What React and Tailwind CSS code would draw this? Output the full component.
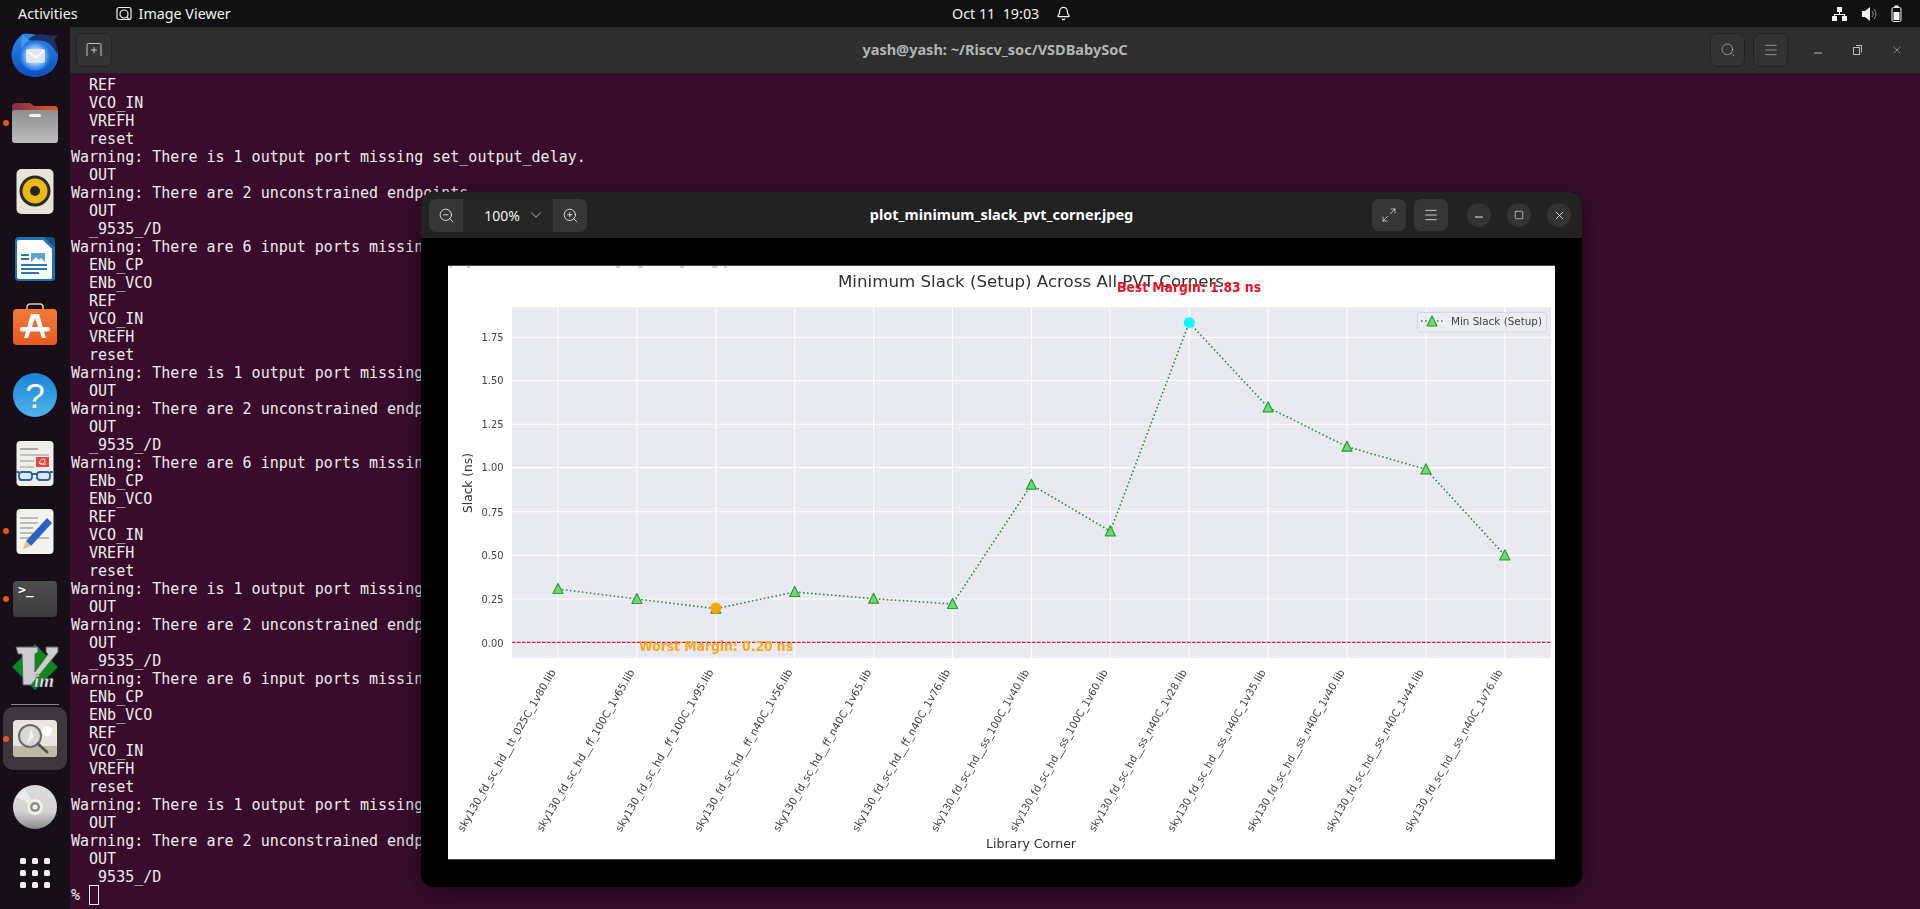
import { Bell, ChevronDown, Maximize2, Menu, Minus, Search, Square, X, ZoomIn, ZoomOut } from 'lucide-react'

const warnOutput = 'Warning: There is 1 output port missing set_output_delay.'
const warnEndpoints = 'Warning: There are 2 unconstrained endpoints.'
const warnInput = 'Warning: There are 6 input ports missing set_input_delay.'

const block = [
  warnOutput, '  OUT', warnEndpoints, '  OUT', '  _9535_/D',
  warnInput, '  ENb_CP', '  ENb_VCO', '  REF', '  VCO_IN', '  VREFH', '  reset',
]

const terminalLines = [
  '  REF', '  VCO_IN', '  VREFH', '  reset',
  ...block, ...block, ...block,
  warnOutput, '  OUT', warnEndpoints, '  OUT', '  _9535_/D',
]

const xTicks = Array.from({ length: 13 }, (_, i) => 558 + i * 78.9)

const yTicks = [
  ['1.75', 337.3], ['1.50', 380.6], ['1.25', 424.3], ['1.00', 467.6],
  ['0.75', 511.7], ['0.50', 555.3], ['0.25', 599], ['0.00', 642.7],
]

const libs = [
  'tt_025C_1v80', 'ff_100C_1v65', 'ff_100C_1v95', 'ff_n40C_1v56', 'ff_n40C_1v65', 'ff_n40C_1v76',
  'ss_100C_1v40', 'ss_100C_1v60', 'ss_n40C_1v28', 'ss_n40C_1v35', 'ss_n40C_1v40', 'ss_n40C_1v44', 'ss_n40C_1v76',
]

const slackY = [589, 599, 608.7, 592, 598.7, 604, 484.7, 531.3, 322.7, 407.3, 446.7, 469.3, 555.3]

function Triangle({ x, y }) {
  return (
    <polygon
      points={`${x},${y - 5.5} ${x + 5},${y + 4.5} ${x - 5},${y + 4.5}`}
      fill="#6fdc72"
      stroke="#2a9a32"
      strokeWidth="1.2"
      strokeLinejoin="round"
    />
  )
}

function SlackChart() {
  const font = '"DejaVu Sans", sans-serif'
  return (
    <svg viewBox="448 266 1107 593" className="block w-full h-full blur-[0.35px]" fontFamily={font}>
      {[[450, 2], [467, 3], [616, 4], [638, 5], [680, 4], [712, 5], [724, 3]].map(([x, w]) => (
        <rect key={x} x={x} y="266" width={w} height="2" fill="#cfcfcf" />
      ))}

      <text x="838" y="286.500" fontSize="16.500" fill="#303030" textLength="386" lengthAdjust="spacingAndGlyphs">
        Minimum Slack (Setup) Across All PVT Corners
      </text>

      <rect x="512" y="307" width="1039" height="351" fill="#e9e9f1" />
      {xTicks.map((x) => (
        <line key={x} x1={x} x2={x} y1="307" y2="658" stroke="#ffffff" strokeWidth="1.1" />
      ))}
      {yTicks.map(([label, y]) => (
        <g key={label}>
          <line x1="512" x2="1551" y1={y} y2={y} stroke="#ffffff" strokeWidth="1.1" />
          <text x="503.5" y={y + 3.8} fontSize="11" fill="#404040" textAnchor="end" textLength="22" lengthAdjust="spacingAndGlyphs">{label}</text>
        </g>
      ))}

      <line x1="512" x2="1551" y1="642.3" y2="642.3" stroke="#ea1026" strokeWidth="1.2" strokeDasharray="3.5 1.5" />
      <polyline
        points={xTicks.map((x, i) => `${x},${slackY[i]}`).join(' ')}
        fill="none"
        stroke="#2c8a3c"
        strokeWidth="1.6"
        strokeDasharray="1.6 2.4"
      />
      {xTicks.map((x, i) => (i === 8 ? null : <Triangle key={x} x={x} y={slackY[i]} />))}
      <circle cx={xTicks[2]} cy="608" r="5.5" fill="#ffa500" />
      <circle cx={xTicks[8]} cy="322.7" r="5.5" fill="#00ffff" />

      <text x="1117" y="292" fontSize="14" fontWeight="700" fill="#ee1122" textLength="144" lengthAdjust="spacingAndGlyphs">
        Best Margin: 1.83 ns
      </text>
      <text x="639" y="650.500" fontSize="14" fontWeight="700" fill="#ffa51c" textLength="154" lengthAdjust="spacingAndGlyphs">
        Worst Margin: 0.20 ns
      </text>

      <rect x="1417.5" y="312.5" width="129" height="19.5" rx="2.5" fill="#ecedf3" stroke="#d6d6de" />
      <line x1="1421" x2="1443" y1="321" y2="321" stroke="#2c8a3c" strokeWidth="1.5" strokeDasharray="1.5 2.5" />
      <Triangle x={1432} y={321.5} />
      <text x="1451" y="325" fontSize="11" fill="#404040" textLength="91" lengthAdjust="spacingAndGlyphs">
        Min Slack (Setup)
      </text>

      <text x="0" y="0" fontSize="12.500" fill="#303030" textAnchor="middle" textLength="60" lengthAdjust="spacingAndGlyphs" transform="translate(472 483) rotate(-90)">
        Slack (ns)
      </text>
      <text x="1031" y="848" fontSize="12.500" fill="#303030" textAnchor="middle" textLength="90" lengthAdjust="spacingAndGlyphs">
        Library Corner
      </text>

      {xTicks.map((x, i) => (
        <text
          key={x}
          x="0"
          y="0"
          fontSize="10.500"
          fill="#404040"
          textAnchor="end"
          textLength="185"
          lengthAdjust="spacingAndGlyphs"
          transform={`translate(${x - 2} 672) rotate(-60)`}
        >
          {`sky130_fd_sc_hd__${libs[i]}.lib`}
        </text>
      ))}
    </svg>
  )
}

function ThunderbirdIcon() {
  return (
    <svg width="48" height="48" viewBox="0 0 48 48">
      <defs>
        <linearGradient id="tb" x1="0" y1="0" x2="0" y2="1">
          <stop offset="0" stopColor="#2a86ea" />
          <stop offset="1" stopColor="#0c4fc0" />
        </linearGradient>
        <radialGradient id="tbcore">
          <stop offset="0.45" stopColor="#9fd4fa" />
          <stop offset="1" stopColor="#1f6fe0" />
        </radialGradient>
      </defs>
      <path d="M12 3C5 8 .5 16 .5 24.500 1 37 11 46 24 46s23-9 23-21.500c0-5-2-9-4-12L34 8C26 3 19 2 12 3z" fill="url(#tb)" />
      <path d="M17 9c4-5 12-7 19-5 4 1 8 1 11 0l-4 5c3 4 4 9 3 14-3-7-8-12-14-13-6-1-11 0-15-1z" fill="#1d2f63" />
      <path d="M12 3c-2 5-3 10-1 15 2-4 4-7 7-9-2-2-5-3-6-6z" fill="#3a9af0" />
      <circle cx="24" cy="25" r="15" fill="url(#tbcore)" />
      <rect x="15" y="18" width="19" height="14" rx="3" fill="#dfe6ee" />
      <path d="M15.500 19.500l9 7 9-7" fill="none" stroke="#ffffff" strokeWidth="2.200" />
    </svg>
  )
}

function FilesIcon() {
  return (
    <svg width="48" height="48" viewBox="0 0 48 48">
      <defs>
        <linearGradient id="ftab" x1="0" y1="0" x2="1" y2="0">
          <stop offset="0" stopColor="#7a2d52" />
          <stop offset="1" stopColor="#e9561f" />
        </linearGradient>
        <linearGradient id="fbody" x1="0" y1="0" x2="0" y2="1">
          <stop offset="0" stopColor="#8f8f8f" />
          <stop offset="1" stopColor="#bdbdbd" />
        </linearGradient>
      </defs>
      <path d="M1 8a4 4 0 0 1 4-4h14l4 3h20a4 4 0 0 1 4 4v8H1z" fill="url(#ftab)" />
      <path d="M1 14a3 3 0 0 1 3-3h40a3 3 0 0 1 3 3v27a3 3 0 0 1-3 3H4a3 3 0 0 1-3-3z" fill="url(#fbody)" />
      <rect x="18" y="15" width="12" height="3" rx="1.500" fill="#f2f2f2" />
    </svg>
  )
}

function RhythmboxIcon() {
  return (
    <svg width="48" height="48" viewBox="0 0 48 48">
      <rect x="5.500" y="2" width="37" height="45" rx="5" fill="#e8e4d8" />
      <circle cx="24" cy="24" r="15.500" fill="#2b2b2b" />
      <circle cx="24" cy="24" r="12.500" fill="#e8b917" />
      <circle cx="24" cy="24" r="5" fill="#262626" />
    </svg>
  )
}

function WriterIcon() {
  return (
    <svg width="48" height="48" viewBox="0 0 48 48">
      <path d="M8 2h26l10 10v30a4 4 0 0 1-4 4H8a4 4 0 0 1-4-4V6a4 4 0 0 1 4-4z" fill="#1b74b4" />
      <path d="M34 2h6a4 4 0 0 1 4 4v6z" fill="#14507f" />
      <path d="M8 5h24l9 9v28a2 2 0 0 1-2 2H8a2 2 0 0 1-2-2V7a2 2 0 0 1 2-2z" fill="#ffffff" />
      <rect x="10" y="19" width="8" height="2" fill="#2a79b4" />
      <rect x="10" y="23" width="8" height="2" fill="#2a79b4" />
      <rect x="20" y="18" width="14" height="9" fill="#5aa5d8" />
      <path d="M20 27l5-5 3 3 2-2 4 4z" fill="#ffffff" />
      <rect x="10" y="29" width="26" height="2" fill="#2a79b4" />
      <rect x="10" y="33" width="26" height="2" fill="#2a79b4" />
      <rect x="10" y="37" width="18" height="2" fill="#2a79b4" />
    </svg>
  )
}

function SoftwareIcon() {
  return (
    <svg width="48" height="48" viewBox="0 0 48 48">
      <defs>
        <linearGradient id="bag" x1="0" y1="0" x2="0" y2="1">
          <stop offset="0" stopColor="#f47a3a" />
          <stop offset="1" stopColor="#e9581f" />
        </linearGradient>
      </defs>
      <path d="M16 6V4a3 3 0 0 1 3-3h10a3 3 0 0 1 3 3v2" fill="none" stroke="#e7c9a8" strokeWidth="1.500" />
      <rect x="2" y="6" width="44" height="36" rx="4" fill="url(#bag)" />
      <path d="M20 11h8l7 24h-4l-7-20-7 20h-4z" fill="#ffffff" />
      <rect x="9" y="24" width="30" height="4.500" rx="2.200" fill="#ffffff" />
    </svg>
  )
}

function HelpIcon() {
  return (
    <svg width="48" height="48" viewBox="0 0 48 48">
      <defs>
        <linearGradient id="help" x1="0" y1="0" x2="0" y2="1">
          <stop offset="0" stopColor="#1a84d8" />
          <stop offset="1" stopColor="#4fb3ec" />
        </linearGradient>
      </defs>
      <circle cx="24" cy="24" r="22" fill="url(#help)" />
      <text x="24" y="37" textAnchor="middle" fontSize="35" fill="#ffffff" fontFamily="'Liberation Sans', sans-serif">?</text>
    </svg>
  )
}

function ReaderIcon() {
  return (
    <svg width="48" height="48" viewBox="0 0 48 48">
      <rect x="5.500" y="2" width="37" height="45" rx="4" fill="#eeeeea" />
      <rect x="9" y="9" width="18" height="2" fill="#aaa89f" />
      <rect x="9" y="15" width="29" height="2" fill="#c2c0b8" />
      <rect x="9" y="21" width="14" height="2" fill="#c2c0b8" />
      <rect x="9" y="27" width="14" height="2" fill="#c2c0b8" />
      <rect x="25" y="18" width="13" height="10" fill="#e8423c" />
      <path d="M28 24c2 2 6 1 6-2s-4-2-5 0 2 4 6 3" fill="none" stroke="#ffffff" strokeWidth="1" />
      <rect x="8" y="33" width="13" height="8" rx="3" fill="#dbe8f0" stroke="#2a62a0" strokeWidth="1.800" />
      <rect x="26" y="33" width="13" height="8" rx="3" fill="#dbe8f0" stroke="#2a62a0" strokeWidth="1.800" />
      <path d="M21 35h5M5 33h3M39 33h3" stroke="#2a62a0" strokeWidth="1.800" />
    </svg>
  )
}

function EditorIcon() {
  return (
    <svg width="48" height="48" viewBox="0 0 48 48">
      <rect x="5.500" y="2" width="37" height="45" rx="4" fill="#f2f2ef" />
      <rect x="9" y="10" width="18" height="2" fill="#bcbab0" />
      <rect x="9" y="15" width="18" height="2" fill="#bcbab0" />
      <rect x="9" y="20" width="13" height="2" fill="#bcbab0" />
      <rect x="9" y="25" width="13" height="2" fill="#bcbab0" />
      <rect x="9" y="30" width="29" height="2" fill="#bcbab0" />
      <path d="M15 34L36 11l5 5-21 23z" fill="#2a62c4" />
      <path d="M15 34l5 5-8 3z" fill="#eebb88" />
    </svg>
  )
}

function TerminalIcon() {
  return (
    <div className="w-[44px] h-[36px] -mt-[1px] rounded-[4px] bg-gradient-to-b from-[#4d4d4d] to-[#3c3c3c] px-[5px] text-white text-[13px] leading-[17px] font-bold font-['DejaVu_Sans_Mono',monospace]">
      &gt;_
    </div>
  )
}

function VimIcon() {
  return (
    <svg width="48" height="48" viewBox="0 0 48 48">
      <polygon points="24,1 47,24 24,47 1,24" fill="#0a8a12" stroke="#14306e" strokeWidth="1" />
      <path d="M5 4h22v5l-3 2v18L37 11l-2-2V4h12v5L20 42h-8L11 11H7z" fill="#cdcdcd" stroke="#5f5f5f" strokeWidth="1" />
      <text x="23" y="44" fontSize="19" fontWeight="700" fontStyle="italic" fill="#e6e6e6" stroke="#333333" strokeWidth="0.4" fontFamily="'Liberation Serif', serif">im</text>
    </svg>
  )
}

function ViewerIcon() {
  return (
    <svg width="46" height="46" viewBox="0 0 46 46">
      <rect x="1" y="4" width="44" height="37" rx="4" fill="#e9e7dd" />
      <path d="M1 30h44v7a4 4 0 0 1-4 4H5a4 4 0 0 1-4-4z" fill="#bdbaa6" />
      <circle cx="35" cy="15" r="5" fill="#ffffff" />
      <circle cx="18" cy="20" r="11" fill="#d8d8d4" stroke="#6b6b6b" strokeWidth="2" />
      <path d="M15 28l4-15 3 7z" fill="#f2f2ee" />
      <path d="M26 28l9 8" stroke="#555555" strokeWidth="3" strokeLinecap="round" />
    </svg>
  )
}

function DiscIcon() {
  return (
    <svg width="48" height="48" viewBox="0 0 48 48">
      <defs>
        <linearGradient id="disc" x1="0" y1="0" x2="0" y2="1">
          <stop offset="0" stopColor="#dcdcdc" />
          <stop offset="0.6" stopColor="#d4d4d4" />
          <stop offset="1" stopColor="#8a8a8a" />
        </linearGradient>
      </defs>
      <circle cx="24" cy="24" r="22" fill="url(#disc)" />
      <path d="M24 24L6 14a22 22 0 0 1 8-8z" fill="#ececec" />
      <circle cx="24" cy="24" r="8" fill="#f1efe6" />
      <circle cx="24" cy="24" r="5" fill="#8d8d84" />
      <circle cx="24" cy="24" r="2.500" fill="#f6f6f6" />
    </svg>
  )
}

function GridIcon() {
  return (
    <div className="grid grid-cols-3 gap-x-[6px] gap-y-[6px]">
      {Array.from({ length: 9 }, (_, i) => (
        <div key={i} className="w-[6px] h-[6px] rounded-[1.5px] bg-[#efefef]" />
      ))}
    </div>
  )
}

function DockSlot({ running, children, height = 'h-[68px]' }) {
  return (
    <div className={`relative flex items-center justify-center ${height}`}>
      {running && <div className="absolute left-[3px] w-[6px] h-[6px] rounded-full bg-[#e95420]" />}
      {children}
    </div>
  )
}

function Dock() {
  return (
    <aside className="w-[70px] shrink-0 -mt-[6px] bg-[#180e18] flex flex-col">
      <DockSlot><ThunderbirdIcon /></DockSlot>
      <DockSlot running><FilesIcon /></DockSlot>
      <DockSlot><RhythmboxIcon /></DockSlot>
      <DockSlot><WriterIcon /></DockSlot>
      <DockSlot><SoftwareIcon /></DockSlot>
      <DockSlot><HelpIcon /></DockSlot>
      <DockSlot><ReaderIcon /></DockSlot>
      <DockSlot running><EditorIcon /></DockSlot>
      <DockSlot running><TerminalIcon /></DockSlot>
      <DockSlot><VimIcon /></DockSlot>
      <div className="mt-[3px] mx-[11px] h-px bg-[#8a8488]" />
      <div className="relative mt-[2px] mx-[3px] h-[63px] rounded-[10px] bg-[#3d363c] flex items-center justify-center">
        <div className="absolute left-0 w-[6px] h-[6px] rounded-full bg-[#e95420]" />
        <ViewerIcon />
      </div>
      <div className="mt-[3px]" />
      <DockSlot><DiscIcon /></DockSlot>
      <DockSlot height="h-[64px]"><GridIcon /></DockSlot>
    </aside>
  )
}

function TopBar() {
  return (
    <header className="relative z-10 h-[27px] bg-[#111111] flex items-center text-[#f2f2f2] text-[14.3px] font-['Noto_Sans',sans-serif]">
      <span className="ml-[18px]">Activities</span>
      <svg width="16" height="16" viewBox="0 0 16 16" className="ml-[38px]" fill="none" stroke="#eeeeee" strokeWidth="1.200">
        <rect x="1" y="1.500" width="14" height="12" rx="2" />
        <circle cx="8" cy="8" r="4" />
        <path d="M11 11l2.500 3" />
      </svg>
      <span className="ml-[7px]">Image Viewer</span>
      <div className="absolute left-[952px] flex items-center">
        <span className="w-[85px] whitespace-pre">Oct 11  19:03</span>
        <Bell size={15} className="ml-[19px]" />
      </div>
      <div className="ml-auto mr-[18px] flex items-center gap-[14px]">
        <svg width="15" height="16" viewBox="0 0 15 16" fill="#f2f2f2">
          <rect x="5" y="1" width="5" height="5" />
          <rect x="0" y="10" width="5" height="5" />
          <rect x="10" y="10" width="5" height="5" />
          <path d="M7 6h1v2h5v2h-1V9H3v1H2V8h5z" />
        </svg>
        <svg width="16" height="16" viewBox="0 0 16 16" fill="#f2f2f2">
          <path d="M1 5h3l5-4v14l-5-4H1z" />
          <path d="M11 5c1.500 1.500 1.500 4.500 0 6M13 3c2.500 3 2.500 7 0 10" fill="none" stroke="#9a9a9a" strokeWidth="1" />
        </svg>
        <svg width="11" height="17" viewBox="0 0 11 17">
          <rect x="1" y="2.500" width="9" height="14" rx="1.500" fill="none" stroke="#f2f2f2" />
          <rect x="3.500" y="0.500" width="4" height="2" fill="#f2f2f2" />
          <rect x="2.500" y="7" width="6" height="8" fill="#f2f2f2" />
        </svg>
      </div>
    </header>
  )
}

function TerminalHeader() {
  return (
    <div className="h-[46px] bg-[#2e2e2e] grid grid-cols-[1fr_auto_1fr] items-center text-[#bdbdbd]">
      <div className="pl-[6px]">
        <button className="w-[36px] h-[34px] rounded-[7px] bg-[#333333] border border-[#222222] flex items-center justify-center">
          <svg width="16" height="14" viewBox="0 0 16 14" fill="none" stroke="#c4c4c4" strokeWidth="1">
            <path d="M1 13V2a1.500 1.500 0 0 1 1.500-1.500h11A1.500 1.500 0 0 1 15 2v11" />
            <path d="M8 4v6M5 7h6" />
          </svg>
        </button>
      </div>
      <div className="text-[14.500px] font-bold font-['Noto_Sans',sans-serif] text-[#b5b5b5]">
        yash@yash: ~/Riscv_soc/VSDBabySoC
      </div>
      <div className="flex items-center justify-end gap-[8px] pr-[17px]">
        <button className="w-[35px] h-[34px] rounded-[7px] bg-[#333333] border border-[#222222] flex items-center justify-center">
          <Search size={16} strokeWidth={1} />
        </button>
        <button className="w-[35px] h-[34px] rounded-[7px] bg-[#333333] border border-[#222222] flex items-center justify-center">
          <Menu size={16} strokeWidth={1} />
        </button>
        <div className="flex items-center ml-[16px] gap-[29px]">
          <Minus size={12} className="mt-[6px]" />
          <svg width="9" height="10" viewBox="0 0 9 10" fill="none" stroke="#bdbdbd" strokeWidth="1">
            <rect x="0.500" y="2.500" width="6" height="7" />
            <path d="M3 .5h5.500v7" />
          </svg>
          <X size={12} strokeWidth={1.200} />
        </div>
      </div>
    </div>
  )
}

function Terminal() {
  return (
    <section className="flex-1 flex flex-col min-w-0">
      <TerminalHeader />
      <div className="flex-1 bg-[#390c2b] pl-px pt-[3px] text-[15px] leading-[18px] text-[#ececec] whitespace-pre font-['DejaVu_Sans_Mono',monospace] overflow-hidden">
        {terminalLines.map((line, i) => (
          <div key={i} className="h-[18px]">{line}</div>
        ))}
        <div className="h-[18px] flex items-center">
          <span>% </span>
          <span className="w-[10px] h-[20px] border border-[#ececec]" />
        </div>
      </div>
    </section>
  )
}

function ViewerWindow() {
  return (
    <div className="absolute left-[421px] top-[192px] w-[1161px] h-[695px] rounded-[13px] overflow-hidden flex flex-col bg-black shadow-[0_6px_30px_rgba(0,0,0,0.45)] font-['Noto_Sans',sans-serif]">
      <div className="h-[46px] shrink-0 bg-[#222222] grid grid-cols-[1fr_auto_1fr] items-center text-[#f0f0f0]">
        <div className="pl-[8px]">
          <div className="inline-flex h-[33px] rounded-[7px] overflow-hidden text-[14px]">
            <button className="w-[34px] bg-[#363636] flex items-center justify-center"><ZoomOut size={17} strokeWidth={1.200} /></button>
            <div className="w-[90px] flex items-center justify-end gap-[7px] pr-[8px] bg-[#262626]">
              <span>100%</span>
              <ChevronDown size={18} strokeWidth={0.900} />
            </div>
            <button className="w-[34px] bg-[#363636] flex items-center justify-center"><ZoomIn size={17} strokeWidth={1.200} /></button>
          </div>
        </div>
        <div className="text-[14.500px] font-bold text-white">
          plot_minimum_slack_pvt_corner.jpeg
        </div>
        <div className="flex items-center justify-end pr-[11px]">
          <button className="w-[34px] h-[32px] rounded-[7px] bg-[#363636] flex items-center justify-center"><Maximize2 size={16} strokeWidth={1} /></button>
          <button className="ml-[8px] w-[34px] h-[32px] rounded-[7px] bg-[#363636] flex items-center justify-center"><Menu size={16} strokeWidth={1.200} /></button>
          <div className="ml-[19px] flex gap-[16px]">
            <button className="w-[24px] h-[24px] rounded-full bg-[#333333] flex items-center justify-center"><Minus size={12} className="mt-[4px]" /></button>
            <button className="w-[24px] h-[24px] rounded-full bg-[#333333] flex items-center justify-center"><Square size={10} strokeWidth={1.500} /></button>
            <button className="w-[24px] h-[24px] rounded-full bg-[#333333] flex items-center justify-center"><X size={13} strokeWidth={1.500} /></button>
          </div>
        </div>
      </div>
      <div className="flex-1 px-[27px] pt-[27px]">
        <div className="h-[595px] bg-white border-y border-[#444444]">
          <SlackChart />
        </div>
      </div>
    </div>
  )
}

export default function App() {
  return (
    <div className="relative w-[1920px] h-[909px] overflow-hidden bg-[#390c2b]">
      <TopBar />
      <div className="flex h-[882px]">
        <Dock />
        <Terminal />
      </div>
      <ViewerWindow />
    </div>
  )
}
